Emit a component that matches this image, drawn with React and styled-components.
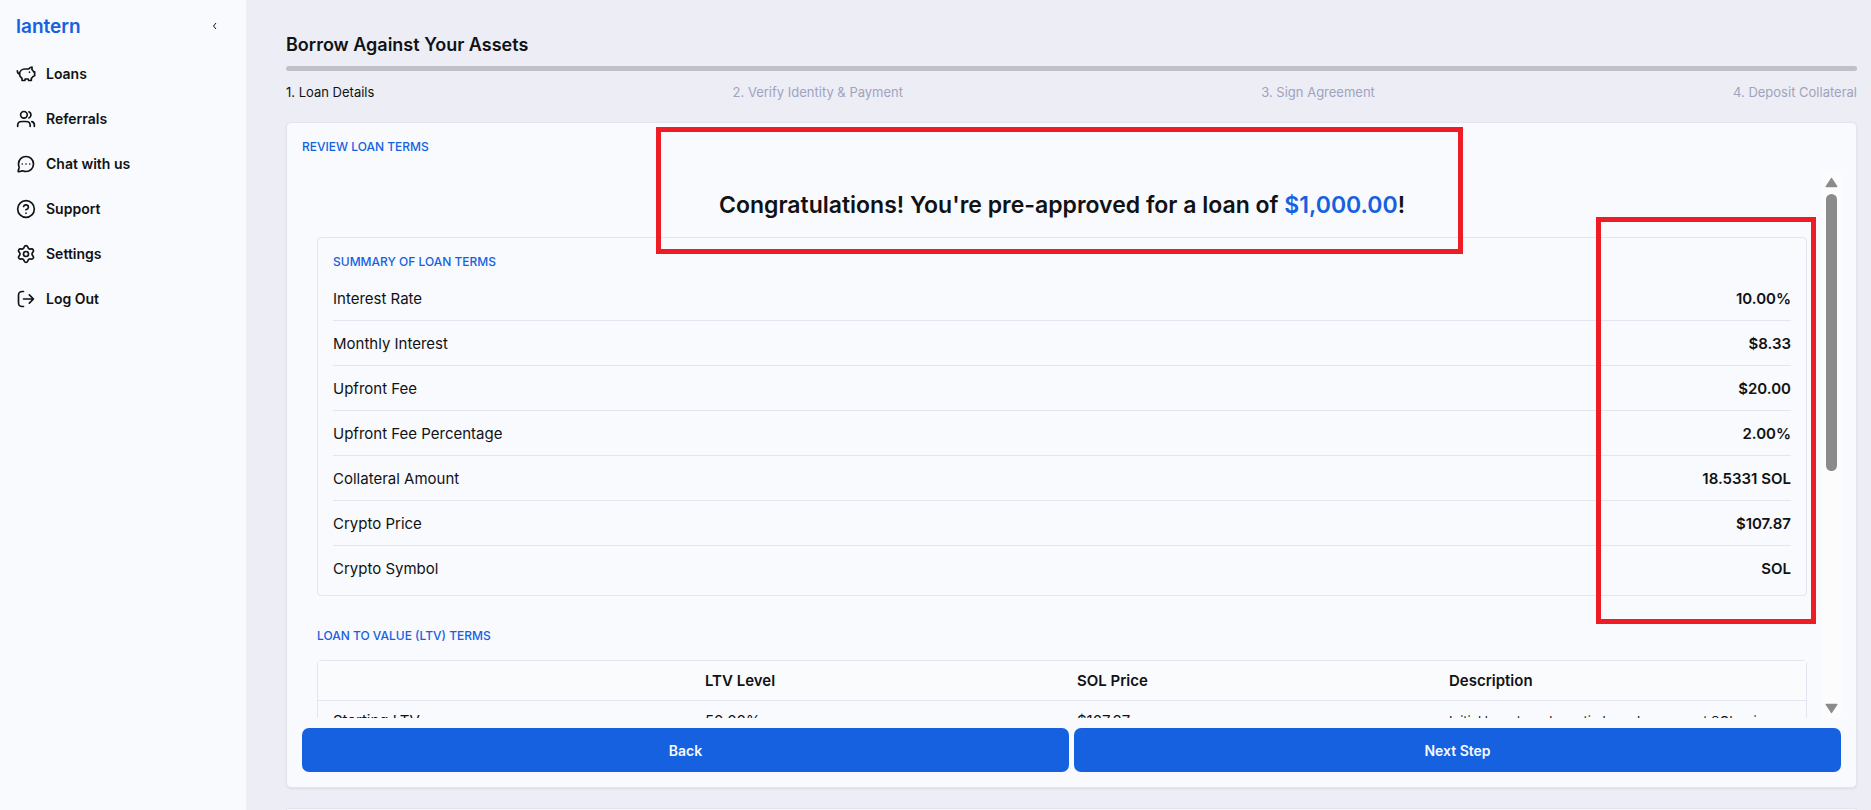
import React, { useState } from "react";
import styled, { createGlobalStyle } from "styled-components";

const navItems = [
  {
    label: "Loans",
    paths: [
      "M4.2 12.4C4.2 8.6 7 6 10.6 6H15.2C16 4.8 17.4 3.8 19.2 3.6V6.8C20.2 7.5 20.8 8.4 21.1 9.4H22.4V13.8L20.3 15.2C19.8 16 19.2 16.6 18.4 17.2V19.8H15.2L14.6 18H11L10.6 19.8H7.2V17C5.3 16 4.2 14.4 4.2 12.4Z",
      "M4.2 12C2.6 11.6 1.6 10.2 1.6 8.2",
      "M16.2 9.8H16.21",
    ],
  },
  {
    label: "Referrals",
    paths: [
      "M22 21V19C22 17.1 20.7 15.6 19 15.1M15.5 3.3C17 3.9 18 5.3 18 7S17 10.1 15.5 10.7M17 21C17 19.1 17 18.2 16.7 17.5C16.3 16.5 15.5 15.7 14.5 15.3C13.8 15 12.9 15 11 15H8C6.1 15 5.2 15 4.5 15.3C3.5 15.7 2.7 16.5 2.3 17.5C2 18.2 2 19.1 2 21",
      "M13.5 7A4 4 0 1 1 5.5 7A4 4 0 0 1 13.5 7Z",
    ],
  },
  {
    label: "Chat with us",
    paths: [
      "M12 21A9 9 0 1 0 3 12C3 13.2 3.2 14.3 3.6 15.3C3.8 15.8 3.8 16 3.7 16.5L2.6 20.4C2.5 21 2.8 21.4 3.4 21.3L7.4 20.3C8 20.2 8.3 20.2 8.8 20.4C9.8 20.8 10.9 21 12 21Z",
      "M7.5 12H7.51",
      "M12 12H12.01",
      "M16.5 12H16.51",
    ],
  },
  {
    label: "Support",
    paths: [
      "M22 12A10 10 0 1 1 2 12A10 10 0 0 1 22 12Z",
      "M9.09 9A3 3 0 0 1 14.92 10C14.92 12 11.92 13 11.92 13",
      "M12 17H12.01",
    ],
  },
  {
    label: "Settings",
    paths: [
      "M9.395 19.371L9.979 20.686C10.332 21.484 11.123 22 12.002 22C12.88 22 13.671 21.484 14.024 20.686L14.608 19.371C14.816 18.905 15.166 18.516 15.608 18.26C16.053 18.003 16.568 17.894 17.078 17.948L18.508 18.1C19.379 18.192 20.222 17.762 20.657 17.006C21.095 16.249 21.045 15.304 20.531 14.598L19.684 13.434C19.382 13.017 19.221 12.515 19.224 12C19.224 11.487 19.386 10.986 19.688 10.571L20.535 9.408C21.049 8.702 21.099 7.757 20.662 7C20.227 6.243 19.384 5.814 18.513 5.906L17.083 6.058C16.572 6.111 16.058 6.002 15.613 5.746C15.17 5.488 14.82 5.097 14.613 4.629L14.024 3.314C13.671 2.516 12.88 2 12.002 2C11.123 2 10.332 2.516 9.979 3.314L9.395 4.629C9.188 5.097 8.838 5.488 8.395 5.746C7.95 6.002 7.436 6.111 6.925 6.058L5.491 5.906C4.619 5.814 3.777 6.243 3.342 7C2.904 7.757 2.955 8.702 3.468 9.408L4.315 10.571C4.617 10.986 4.78 11.487 4.78 12C4.78 12.513 4.617 13.014 4.315 13.429L3.468 14.592C2.955 15.298 2.904 16.243 3.342 17C3.777 17.756 4.619 18.186 5.491 18.094L6.921 17.942C7.431 17.889 7.946 17.998 8.391 18.254C8.835 18.511 9.186 18.902 9.395 19.371Z",
      "M15 12A3 3 0 1 1 9 12A3 3 0 0 1 15 12Z",
    ],
  },
  {
    label: "Log Out",
    paths: [
      "M16 17L21 12L16 7M21 12H9",
      "M9 3H7.8C4 3 3 4 3 7.8V16.2C3 20 4 21 7.8 21H9",
    ],
  },
];

const steps = [
  "1. Loan Details",
  "2. Verify Identity & Payment",
  "3. Sign Agreement",
  "4. Deposit Collateral",
];

const terms = [
  ["Interest Rate", "10.00%"],
  ["Monthly Interest", "$8.33"],
  ["Upfront Fee", "$20.00"],
  ["Upfront Fee Percentage", "2.00%"],
  ["Collateral Amount", "18.5331 SOL"],
  ["Crypto Price", "$107.87"],
  ["Crypto Symbol", "SOL"],
];

function Sidebar() {
  return (
    <SidebarSection>
      <SidebarTop>
        <Logo href="#">lantern</Logo>
        <CollapseButton aria-label="Collapse menu">
          <svg width="6" height="8" viewBox="0 0 6 8" fill="none" stroke="#111">
            <path d="M4 1 L1.5 4 L4 7" />
          </svg>
        </CollapseButton>
      </SidebarTop>
      <Nav>
        {navItems.map(({ label, paths }) => (
          <NavLink href="#" key={label}>
            <NavIcon viewBox="0 0 24 24" aria-hidden="true">
              {paths.map((d) => (
                <path key={d} d={d} />
              ))}
            </NavIcon>
            {label}
          </NavLink>
        ))}
      </Nav>
    </SidebarSection>
  );
}

function LoanTerms() {
  return (
    <>
      <Congrats>
        Congratulations! You're pre-approved for a loan of{" "}
        <Amount>$1,000.00</Amount>!
      </Congrats>
      <Summary>
        <SectionLabel>SUMMARY OF LOAN TERMS</SectionLabel>
        <TermList>
          {terms.map(([name, value]) => (
            <TermRow key={name}>
              <dt>{name}</dt>
              <TermValue>{value}</TermValue>
            </TermRow>
          ))}
        </TermList>
      </Summary>
      <LtvLabel>LOAN TO VALUE (LTV) TERMS</LtvLabel>
      <TableFrame>
        <LtvTable>
          <thead>
            <tr>
              <th aria-label="Term" />
              <th>LTV Level</th>
              <th>SOL Price</th>
              <th>Description</th>
            </tr>
          </thead>
          <tbody>
            <tr>
              <td>Starting LTV</td>
              <td>50.00%</td>
              <td>$107.87</td>
              <Description>
                Initial loan-to-value ratio based on current SOL price
              </Description>
            </tr>
          </tbody>
        </LtvTable>
      </TableFrame>
    </>
  );
}

function App() {
  const [current, setCurrent] = useState(0);

  return (
    <Page>
      <GlobalStyle />
      <Sidebar />
      <Main>
        <Title>Borrow Against Your Assets</Title>
        <Progress />
        <Steps>
          {steps.map((step, i) => (
            <Step key={step} $active={i === current}>
              {step}
            </Step>
          ))}
        </Steps>
        <Card>
          <SectionLabel>REVIEW LOAN TERMS</SectionLabel>
          <ScrollRow>
            <ScrollContent>
              <LoanTerms />
            </ScrollContent>
            <Scrollbar aria-hidden="true">
              <Arrow viewBox="0 0 12 10">
                <path d="M6 1.2 L11 8.8 H1 Z" />
              </Arrow>
              <Track>
                <Thumb />
              </Track>
              <Arrow viewBox="0 0 12 10">
                <path d="M6 8.8 L11 1.2 H1 Z" />
              </Arrow>
            </Scrollbar>
          </ScrollRow>
          <Actions>
            <ActionButton onClick={() => setCurrent(Math.max(current - 1, 0))}>
              Back
            </ActionButton>
            <ActionButton onClick={() => setCurrent(Math.min(current + 1, 3))}>
              Next Step
            </ActionButton>
          </Actions>
          <HeadingMark />
          <ValuesMark />
        </Card>
        <NextCard />
      </Main>
    </Page>
  );
}

export default App;

const GlobalStyle = createGlobalStyle`
  * {
    box-sizing: border-box;
  }
  body {
    margin: 0;
    background: #ededf6;
    color: #111214;
    font-family: Inter, "Liberation Sans", sans-serif;
  }
  h1, h2, h3, dl, dd, ol {
    margin: 0;
    padding: 0;
  }
`;

const Page = styled.div`
  display: flex;
  height: 100vh;
  overflow: hidden;
`;

const SidebarSection = styled.aside`
  flex: 0 0 246px;
  padding: 12px 16px;
  background: #f8fafe;
`;
const SidebarTop = styled.div`
  display: flex;
  align-items: center;
  justify-content: space-between;
  height: 28px;
  padding-right: 8px;
`;
const Logo = styled.a`
  color: #1561e0;
  font-size: 19px;
  font-weight: 600;
  text-decoration: none;
`;
const CollapseButton = styled.button`
  display: flex;
  padding: 4px;
  border: none;
  background: none;
  cursor: pointer;
`;
const Nav = styled.nav`
  display: flex;
  flex-direction: column;
  margin-top: 11px;
`;
const NavLink = styled.a`
  display: flex;
  align-items: center;
  gap: 10px;
  height: 45px;
  color: #111214;
  font-size: 14px;
  font-weight: 600;
  text-decoration: none;
`;
const NavIcon = styled.svg`
  width: 20px;
  height: 20px;
  fill: none;
  stroke: currentColor;
  stroke-width: 2;
  stroke-linecap: round;
  stroke-linejoin: round;
`;

const Main = styled.main`
  display: flex;
  flex: 1;
  flex-direction: column;
  min-width: 0;
  padding: 33px 14px 0 40px;
`;
const Title = styled.h1`
  font-size: 18px;
  font-weight: 600;
  line-height: 24px;
`;
const Progress = styled.div`
  flex: none;
  height: 5px;
  margin-top: 9px;
  border-radius: 3px;
  background: #c0c1c6;
`;
const Steps = styled.ol`
  display: flex;
  justify-content: space-between;
  margin-top: 11px;
  list-style: none;
`;
const Step = styled.li`
  color: ${(props) => (props.$active ? "#111214" : "#a0a3bd")};
  font-size: 13px;
  line-height: 20px;
`;

const Card = styled.section`
  position: relative;
  display: flex;
  flex: 1;
  flex-direction: column;
  min-height: 0;
  margin-top: 20px;
  padding: 15px;
  border: 1px solid #e4e4f0;
  border-radius: 5px;
  background: #f8fafe;
  box-shadow: 0 1px 2px rgba(20, 20, 60, 0.08);
`;
const NextCard = styled.div`
  flex: none;
  height: 2px;
  margin-top: 20px;
  border: 1px solid #e4e4f0;
  border-bottom: none;
  border-radius: 5px 5px 0 0;
  background: #f8fafe;
`;
const SectionLabel = styled.h2`
  color: #1561e0;
  font-size: 12px;
  font-weight: 500;
  line-height: 18px;
`;

const ScrollRow = styled.div`
  display: flex;
  flex: 1;
  min-height: 0;
  margin-top: 15px;
`;
const ScrollContent = styled.div`
  flex: 1;
  min-width: 0;
  padding: 16px 15px 0;
  overflow: hidden;
`;
const Scrollbar = styled.div`
  display: flex;
  flex: none;
  flex-direction: column;
  align-items: center;
  gap: 6px;
  width: 19px;
  padding: 6px 0 4px;
  background: #fcfcfd;
`;
const Arrow = styled.svg`
  width: 13px;
  height: 11px;
  fill: #8b8b8b;
  stroke: #8b8b8b;
  stroke-linejoin: round;
`;
const Track = styled.div`
  flex: 1;
  width: 11px;
`;
const Thumb = styled.div`
  height: 55%;
  border-radius: 6px;
  background: #8b8b8b;
`;

const Congrats = styled.h1`
  font-size: 23px;
  font-weight: 600;
  line-height: 36px;
  text-align: center;
`;
const Amount = styled.span`
  color: #1561e0;
`;
const Summary = styled.section`
  margin-top: 14px;
  padding: 15px 15px 4px;
  border: 1px solid #e4e5f0;
  border-radius: 4px;
`;
const TermList = styled.dl`
  margin-top: 5px;
`;
const TermRow = styled.div`
  display: flex;
  align-items: center;
  justify-content: space-between;
  height: 45px;
  border-bottom: 1px solid #e4e5f0;
  font-size: 15px;
  &:last-child {
    border-color: transparent;
  }
`;
const TermValue = styled.dd`
  font-weight: 600;
`;
const LtvLabel = styled(SectionLabel)`
  margin: 31px 0 15px;
`;
const TableFrame = styled.div`
  border: 1px solid #e4e5f0;
  border-radius: 4px;
`;
const LtvTable = styled.table`
  width: 100%;
  border-collapse: collapse;
  table-layout: fixed;
  font-size: 15px;
  line-height: 24px;
  th {
    padding: 8px 15px 7px;
    border-bottom: 1px solid #e4e5f0;
    background: #fafbfd;
    font-weight: 600;
    text-align: left;
  }
  td {
    padding: 8px 15px;
    vertical-align: top;
  }
`;
const Description = styled.td`
  font-size: 13px;
`;

const Actions = styled.div`
  display: flex;
  gap: 5px;
  margin-top: 10px;
`;
const ActionButton = styled.button`
  flex: 1;
  height: 44px;
  border: none;
  border-radius: 7px;
  background: #1561e0;
  color: #f8faff;
  font-family: inherit;
  font-size: 14px;
  font-weight: 600;
  cursor: pointer;
`;

/* highlight frames over the card */
const Mark = styled.div`
  position: absolute;
  border: 5px solid #ee1c25;
  pointer-events: none;
`;
const HeadingMark = styled(Mark)`
  top: 4px;
  left: calc(50% - 416px);
  width: 807px;
  height: 127px;
`;
const ValuesMark = styled(Mark)`
  top: 94px;
  right: 40px;
  width: 220px;
  height: 407px;
`;
